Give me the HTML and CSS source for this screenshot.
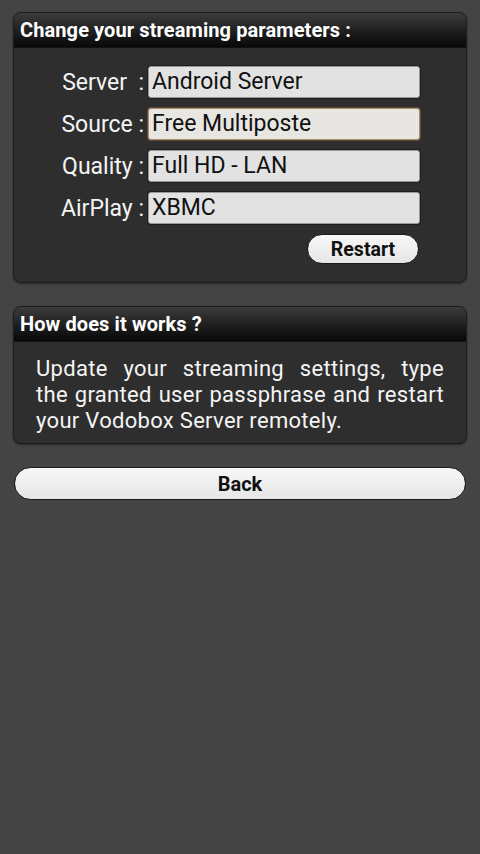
FILE: index.html
```html
<!DOCTYPE html>
<html lang="en">
<head>
    <meta charset="UTF-8">
    <meta name="viewport" content="width=device-width, initial-scale=1.0">
    <title>Vodobox Remote</title>
    <link rel="stylesheet" href="styles.css">
</head>
<body>
    <div class="page">
        <div class="card">
            <div class="card-header">Change your streaming parameters :</div>
            <div class="card-body form-body">
                <div class="form">
                    <label class="label">Server&nbsp; :</label>
                    <div class="field">Android Server</div>

                    <label class="label">Source :</label>
                    <div class="field focused">Free Multiposte</div>

                    <label class="label">Quality :</label>
                    <div class="field">Full HD - LAN</div>

                    <label class="label">AirPlay :</label>
                    <div class="field">XBMC</div>

                    <div class="actions">
                        <button class="pill restart">Restart</button>
                    </div>
                </div>
            </div>
        </div>

        <div class="card">
            <div class="card-header">How does it works ?</div>
            <div class="card-body info-body">
                Update your streaming settings, type the&nbsp;granted user passphrase and restart your Vodobox Server remotely.
            </div>
        </div>

        <button class="pill back">Back</button>
    </div>
</body>
</html>
```

FILE: styles.css
```css
* {
    margin: 0;
    padding: 0;
    box-sizing: border-box;
}

body {
    font-family: Roboto, "Liberation Sans", sans-serif;
    background: #444444;
    color: white;
    height: 100vh;
    overflow: hidden;
}

.page {
    display: flex;
    flex-direction: column;
    gap: 23px;
    padding: 12px 13px 0 13px;
}

.card {
    background: #2e2e2e;
    border: 1px solid #1c1c1c;
    border-radius: 8px;
    overflow: hidden;
    box-shadow: 0 1px 2px rgba(0, 0, 0, 0.4);
}

.card-header {
    height: 35px;
    padding: 0 6px;
    display: flex;
    align-items: center;
    font-size: 20px;
    font-weight: bold;
    letter-spacing: 0.1px;
    background: linear-gradient(to bottom, #3c3c3c 0%, #1e1e1e 55%, #080808 100%);
    border-bottom: 1px solid #111;
}

.form-body {
    padding: 18px 0 18px 0;
}

.form {
    display: grid;
    grid-template-columns: 84px 272px;
    column-gap: 4px;
    row-gap: 10px;
    justify-content: center;
    align-items: center;
}

.label {
    font-size: 23px;
    text-align: right;
    white-space: nowrap;
    color: #f4f4f4;
}

.field {
    height: 32px;
    background: #e2e2e2;
    color: #111;
    font-size: 23px;
    line-height: 30px;
    padding: 0 3px;
    border: 1px solid #9a9a9a;
    border-radius: 3px;
    box-shadow: 0 0 0 1px #1e1e1e;
}

.field.focused {
    background: #e8e6e3;
    border-color: #a88c68;
    box-shadow: 0 0 0 1px #5a4a38;
}

.actions {
    grid-column: 2;
    display: flex;
    justify-content: flex-end;
    padding-right: 1px;
}

.pill {
    font-family: Roboto, "Liberation Sans", sans-serif;
    font-weight: bold;
    color: #111;
    background: linear-gradient(to bottom, #f7f7f7 0%, #e6e6e6 100%);
    border: 1px solid #1a1a1a;
    border-radius: 16px;
}

.restart {
    width: 112px;
    height: 30px;
    font-size: 19.5px;
}

.info-body {
    padding: 14px 22px 9px 22px;
    font-size: 22px;
    line-height: 26px;
    letter-spacing: 0.3px;
    text-align: justify;
    color: #f4f4f4;
}

.back {
    height: 33px;
    margin: 0 1px;
    font-size: 20px;
    border-radius: 17px;
}
```
